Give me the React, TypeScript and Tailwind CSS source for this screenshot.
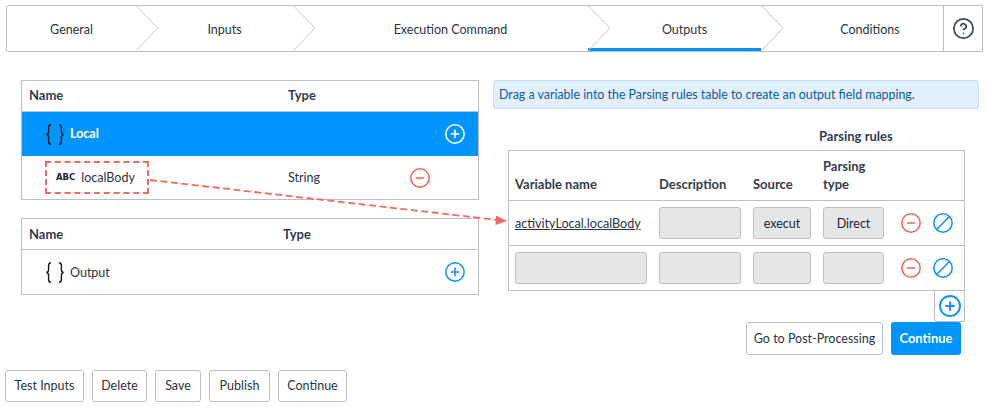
import { CircleMinus, CirclePlus, CircleQuestionMark, Ban } from "lucide-react";

const font = { fontFamily: 'Lato, "Open Sans", sans-serif' };

const steps = [
  { label: "General", cell: "w-[129px]" },
  { label: "Inputs", cell: "w-[157px] pl-[20px]" },
  { label: "Execution Command", cell: "w-[295px] pl-[20px]" },
  { label: "Outputs", cell: "w-[173px] pl-[20px]", active: true },
  { label: "Conditions", cell: "w-[182px] pl-[36px]" },
];

function Chevron() {
  return (
    <svg className="absolute right-[-23px] top-0 z-10" width="23" height="45" viewBox="0 0 23 45" fill="none">
      <path d="M0.5 0L22 22L0.5 44.5" stroke="#c6c8cc" strokeWidth="1" />
    </svg>
  );
}

function Stepper() {
  return (
    <div className="mx-[6px] mt-[5px] flex h-[47px] w-[977px] rounded-[2px] border border-[#bcbec2] bg-white">
      {steps.map((step, i) => (
        <div key={step.label} className={`relative flex h-full items-center justify-center ${step.cell}`}>
          <span className="pt-[3px] text-[12.5px] text-[#2b3442]">{step.label}</span>
          {i < steps.length - 1 && <Chevron />}
          {step.active && <div className="absolute bottom-0 left-0 right-0 h-[3px] bg-[#0094ff]" />}
        </div>
      ))}
      <div className="flex h-full w-[39px] items-center justify-center border-l border-[#bcbec2]">
        <CircleQuestionMark size={23} strokeWidth={1.8} className="text-[#3c4656]" />
      </div>
    </div>
  );
}

function Braces() {
  return (
    <svg className="mr-[6px] shrink-0" width="18" height="21" viewBox="0 0 18 21" fill="none" stroke="#14181f" strokeWidth="1.4">
      <path d="M5 0.7C2.8 0.7 2.6 1.6 2.6 3.5V7.5C2.6 9.2 2 10.2 0.5 10.5C2 10.8 2.6 11.8 2.6 13.5V17.5C2.6 19.4 2.8 20.3 5 20.3" />
      <path d="M13 0.7C15.2 0.7 15.4 1.6 15.4 3.5V7.5C15.4 9.2 16 10.2 17.5 10.5C16 10.8 15.4 11.8 15.4 13.5V17.5C15.4 19.4 15.2 20.3 13 20.3" />
    </svg>
  );
}

function LeftTables() {
  return (
    <div className="ml-[21px] flex w-[458px] flex-col gap-[18px]">
      <div className="border border-[#bcbec2]">
        <div className="flex h-[31px] items-center border-b border-[#bcbec2] pl-[7px] text-[13px] font-bold text-[#333c4a]">
          <span className="w-[259px]">Name</span>
          <span>Type</span>
        </div>
        <div className="flex h-[44px] items-center bg-[#0094ff] pl-[24px] pr-[12px]">
          <Braces />
          <span className="text-[12.5px] font-bold text-white">Local</span>
          <CirclePlus size={22} strokeWidth={1.7} className="ml-auto text-white" />
        </div>
        <div className="flex h-[43px] items-center pl-[23px]">
          <div className="flex h-[33px] w-[104px] shrink-0 items-center gap-[6px] border-2 border-dashed border-[#ef6a60] pl-[9px]">
            <span className="text-[8.5px] font-bold text-[#1d2430]" style={{ fontFamily: '"DejaVu Sans", sans-serif' }}>
              ABC
            </span>
            <span className="pt-[2px] text-[12.5px] text-[#2b3442]">localBody</span>
          </div>
          <span className="ml-[139px] w-[121px] pt-[2px] text-[12.5px] text-[#2b3442]">String</span>
          <CircleMinus size={22} strokeWidth={1.7} className="text-[#f4625c]" />
        </div>
      </div>
      <div className="border border-[#bcbec2]">
        <div className="flex h-[31px] items-center border-b border-[#bcbec2] pl-[7px] pt-px text-[13px] font-bold text-[#333c4a]">
          <span className="w-[254px]">Name</span>
          <span>Type</span>
        </div>
        <div className="flex h-[44px] items-center pl-[24px] pr-[12px]">
          <Braces />
          <span className="pt-[2px] text-[12.5px] text-[#2b3442]">Output</span>
          <CirclePlus size={22} strokeWidth={1.7} className="ml-auto text-[#0f93f5]" />
        </div>
      </div>
    </div>
  );
}

const rowGrid = "grid grid-cols-[132px_82px_58px_61px] gap-x-[12px]";

function Field({ value }: { value?: string }) {
  return (
    <div className="flex h-[32px] items-center justify-center rounded-[3px] border border-[#bcbec2] bg-[#e5e6e8] pt-[3px] text-[12.5px] text-[#1d2430]">
      {value}
    </div>
  );
}

function RowIcons() {
  return (
    <div className="ml-[16px] flex items-center gap-[10px]">
      <CircleMinus size={22} strokeWidth={1.7} className="text-[#f4625c]" />
      <Ban size={22} strokeWidth={1.7} className="-scale-x-100 text-[#0f93f5]" />
    </div>
  );
}

function ParsingRules() {
  return (
    <div className="ml-[15px] flex w-[457px] flex-col">
      <div className="mt-[19px] h-[22px] pl-[311px] text-[13px] leading-[16px] font-bold text-[#333c4a]">Parsing rules</div>
      <div className="border border-[#bcbec2]">
        <div className="flex h-[50px] items-end border-b border-[#bcbec2] pb-[7px] pl-[6px] text-[13px] leading-[18px] font-bold text-[#333c4a]">
          <div className={`${rowGrid} items-end`}>
            <span>Variable name</span>
            <span>Description</span>
            <span>Source</span>
            <span>
              Parsing
              <br />
              type
            </span>
          </div>
        </div>
        <div className="flex h-[45px] items-center border-b border-[#bcbec2] pl-[6px]">
          <div className={`${rowGrid} items-center`}>
            <span className="pt-[3px] text-[12.6px] text-[#2b3442] underline">activityLocal.localBody</span>
            <Field />
            <Field value="execut" />
            <Field value="Direct" />
          </div>
          <RowIcons />
        </div>
        <div className="flex h-[44px] items-center pl-[6px]">
          <div className={`${rowGrid} items-center`}>
            <Field />
            <Field />
            <Field />
            <Field />
          </div>
          <RowIcons />
        </div>
      </div>
      <div className="ml-auto flex h-[31px] w-[31px] items-center justify-center rounded-b-[3px] border border-t-0 border-[#bcbec2]">
        <CirclePlus size={24} strokeWidth={1.9} className="text-[#0f93f5]" />
      </div>
      <div className="mr-[4px] flex justify-end gap-[8px]">
        <button className="h-[33px] w-[137px] rounded-[3px] border border-[#bcbec2] bg-white pt-px text-[12.5px] text-[#2b3442]">
          Go to Post-Processing
        </button>
        <button className="h-[33px] w-[70px] rounded-[3px] bg-[#0094ff] pt-px text-[13px] font-bold text-white">Continue</button>
      </div>
    </div>
  );
}

function Arrow() {
  return (
    <svg className="pointer-events-none absolute left-0 top-0 z-20" width="989" height="412" viewBox="0 0 989 412" fill="none">
      <path d="M150 180L498 220" stroke="#ef6a60" strokeWidth="1.8" strokeDasharray="7 3.5" />
      <path d="M507 221L496 215.5L495.5 225Z" fill="#ef6a60" />
    </svg>
  );
}

export default function App() {
  return (
    <div className="relative h-[412px] w-[989px] overflow-hidden bg-white" style={font}>
      <Arrow />
      <Stepper />
      <div className="mt-[28px] flex items-start">
        <LeftTables />
        <div className="ml-[14px] flex w-[486px] flex-col">
          <div className="flex h-[29px] items-center rounded-[2px] border border-[#c5def7] bg-[#e2effc] pl-[5px] pt-[2px] text-[12.4px] text-[#0d5a9c]">
            Drag a variable into the Parsing rules table to create an output field mapping.
          </div>
          <ParsingRules />
        </div>
      </div>
      <div className="absolute bottom-[10px] left-[5px] flex gap-[8px]">
        {[
          ["Test Inputs", "w-[79px]"],
          ["Delete", "w-[55px]"],
          ["Save", "w-[46px]"],
          ["Publish", "w-[61px]"],
          ["Continue", "w-[69px]"],
        ].map(([label, width]) => (
          <button key={label} className={`h-[32px] rounded-[3px] border border-[#bcbec2] bg-white pt-px text-[12.5px] text-[#2b3442] ${width}`}>
            {label}
          </button>
        ))}
      </div>
    </div>
  );
}
